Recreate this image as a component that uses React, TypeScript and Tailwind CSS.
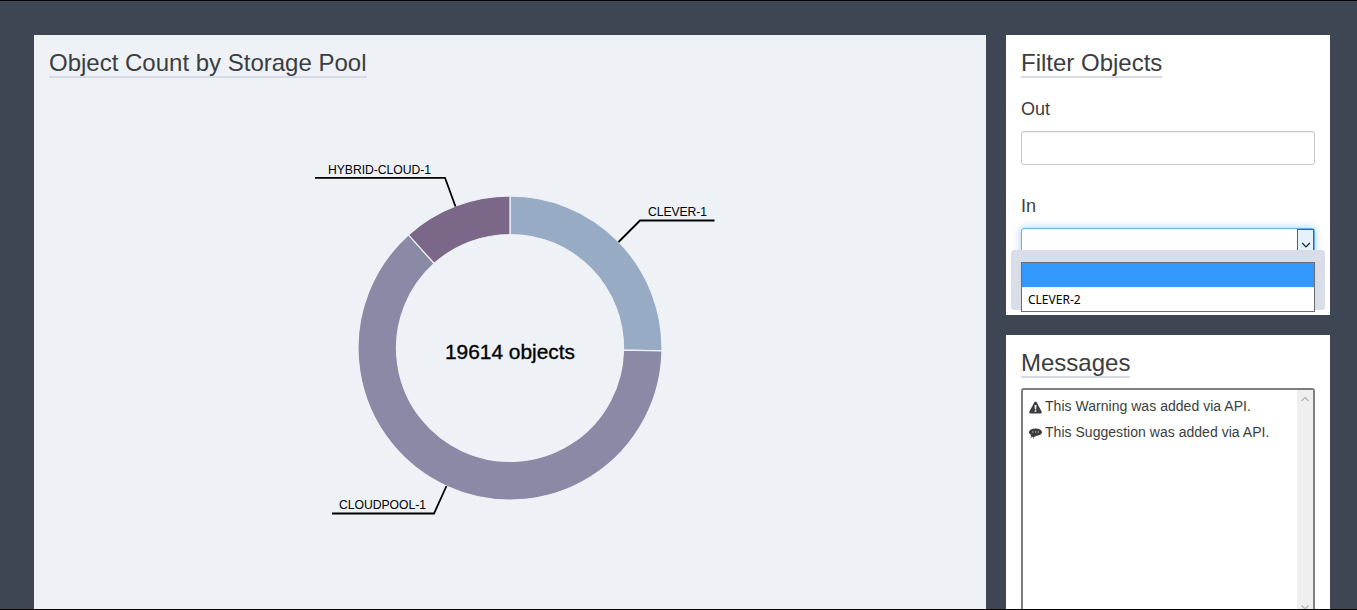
import type { ReactNode } from 'react';

const CX = 510;
const CY = 348;
const OUTER = 152;
const INNER = 113.5;

function point(radius: number, degrees: number) {
  const a = (degrees * Math.PI) / 180;
  return `${(CX + radius * Math.sin(a)).toFixed(2)} ${(CY - radius * Math.cos(a)).toFixed(2)}`;
}

function ringSlice(from: number, to: number) {
  const large = to - from > 180 ? 1 : 0;
  return `M${point(OUTER, from)} A${OUTER} ${OUTER} 0 ${large} 1 ${point(OUTER, to)} L${point(INNER, to)} A${INNER} ${INNER} 0 ${large} 0 ${point(INNER, from)} Z`;
}

const slices = [
  { name: 'CLEVER-1', from: 0, to: 91.1, color: '#98abc5', line: '618.5,242 640,220.5 714.5,220.5', x: 677.5, y: 216, width: 59 },
  { name: 'CLOUDPOOL-1', from: 91.1, to: 318.1, color: '#8a89a6', line: '446.5,486 434,513.5 332,513.5', x: 382.5, y: 509, width: 87 },
  { name: 'HYBRID-CLOUD-1', from: 318.1, to: 360, color: '#7b6888', line: '455.5,206.5 445,177.8 315,177.8', x: 379.5, y: 174, width: 103 },
];

function Title({ children }: { children: ReactNode }) {
  return (
    <h3 className="w-fit whitespace-nowrap border-b-2 border-[#d5dae4] text-2xl leading-[27px]">{children}</h3>
  );
}

function StoragePoolChart() {
  return (
    <svg className="block h-[531px] w-[952px]" viewBox="34 78 952 531" fontFamily="Liberation Sans, Arial, sans-serif">
      {slices.map((s) => (
        <g key={s.name}>
          <path d={ringSlice(s.from, s.to)} fill={s.color} stroke="#eef2f7" strokeWidth="1.2" />
          <polyline points={s.line} fill="none" stroke="#000" strokeWidth="1.8" />
          <text x={s.x} y={s.y} textAnchor="middle" fontSize="12.2" textLength={s.width}>{s.name}</text>
        </g>
      ))}
      <text x="510" y="359" textAnchor="middle" fontSize="20.9" textLength="130" stroke="#000" strokeWidth="0.35">19614 objects</text>
    </svg>
  );
}

function WarningIcon() {
  return (
    <svg className="mt-[5px] h-[13px] w-[13px] shrink-0" viewBox="0 0 13 13">
      <path d="M6.5 .4c.5 0 .8.3 1 .7l5.1 9.500c.5 1-.1 1.900-1 1.900H1.400c-.9 0-1.500-.9-1-1.900L5.500 1.100c.2-.4.5-.7 1-.7Z" fill="#3b3d40" />
      <path d="M5.500 4.100h2L7.100 8.400H5.900ZM5.700 9.300h1.600v1.500H5.700Z" fill="#fff" />
    </svg>
  );
}

function SuggestionIcon() {
  return (
    <svg className="mt-[5px] h-[13px] w-[13px] shrink-0" viewBox="0 0 13 13">
      <ellipse cx="6.500" cy="5.200" rx="6.500" ry="3.700" fill="#3b3d40" />
      <ellipse cx="4.200" cy="8.700" rx="2.700" ry="1.300" fill="#3b3d40" />
      <circle cx="4.500" cy="10.900" r=".6" fill="#3b3d40" />
      <circle cx="2" cy="10.300" r=".5" fill="#3b3d40" />
      <path d="M3.200 5h1.300M5.900 5h1.300M8.600 5h1.300" stroke="#c8c9cb" strokeWidth="1.100" />
    </svg>
  );
}

function Message({ icon, children }: { icon: ReactNode; children: ReactNode }) {
  return (
    <li className="flex h-[26px] gap-[3px] text-sm leading-5">
      {icon}
      <span className="whitespace-nowrap tracking-[0.03px]">{children}</span>
    </li>
  );
}

export default function App() {
  return (
    <div className="h-[610px] w-[1357px] overflow-hidden border-y border-black bg-[#3e4654] font-['Liberation_Sans',Arial,sans-serif] text-[#3b3d40]">
      <main className="flex gap-5 pl-[34px] pt-[34px]">
        <section className="h-[574px] w-[952px] shrink-0 overflow-hidden bg-[#eef2f7]">
          <div className="pl-[15px] pt-[14px]">
            <Title>Object Count by Storage Pool</Title>
          </div>
          <StoragePoolChart />
        </section>

        <aside className="flex w-[324px] shrink-0 flex-col gap-5">
          <section className="h-[280px] bg-white px-[15px] pt-[14px]">
            <Title>Filter Objects</Title>
            <label className="mt-[21px] block text-lg leading-5">Out</label>
            <div className="mt-3 h-[34px] rounded-[3px] border border-[#c6c6c6] bg-white shadow-[inset_0_1px_1px_rgba(0,0,0,0.07)]" />
            <label className="mt-[31px] block text-lg leading-5">In</label>
            <div className="relative mt-3">
              <div className="flex h-[34px] justify-end rounded-[3px] border border-[#66afe9] bg-white shadow-[0_0_8px_rgba(102,175,233,0.6)]">
                <div className="flex w-[17px] justify-center border border-[#0078d7] bg-[#e5f1fb]">
                  <svg className="mt-[10px] h-[10px] w-[10px]" viewBox="0 0 10 10">
                    <path d="M1.200 3 5 6.800 8.800 3" fill="none" stroke="#222" strokeWidth="1.200" />
                  </svg>
                </div>
              </div>
              <div className="absolute -left-[10px] top-[22px] h-[60px] w-[314px] rounded-[3px] bg-[#d9dde8] px-[10px] pt-3">
                <ul className="h-[50px] border border-[#6a6c70] bg-white font-['Noto_Sans','Open_Sans',sans-serif] text-xs text-black">
                  <li className="h-6 bg-[#3399ff]" />
                  <li className="pl-[6px] pt-px leading-6">CLEVER-2</li>
                </ul>
              </div>
            </div>
          </section>

          <section className="h-[280px] bg-white px-[15px] pt-[14px]">
            <Title>Messages</Title>
            <div className="mt-[10px] flex h-[260px] justify-between rounded-[3px] border-2 border-[#7c7d7f] pl-[6px]">
              <ul className="pt-[6px]">
                <Message icon={<WarningIcon />}>This Warning was added via API.</Message>
                <Message icon={<SuggestionIcon />}>This Suggestion was added via API.</Message>
              </ul>
              <div className="flex h-[221px] w-4 flex-col items-center justify-between bg-[#efefef] pt-[5px]">
                <svg className="h-2 w-2" viewBox="0 0 8 8">
                  <path d="M.5 6 4 2.500 7.500 6" fill="none" stroke="#b9b9b9" strokeWidth="1.500" />
                </svg>
                <svg className="h-2 w-2" viewBox="0 0 8 8">
                  <path d="M.5 2.500 4 6 7.500 2.500" fill="none" stroke="#b9b9b9" strokeWidth="1.500" />
                </svg>
              </div>
            </div>
          </section>
        </aside>
      </main>
    </div>
  );
}
